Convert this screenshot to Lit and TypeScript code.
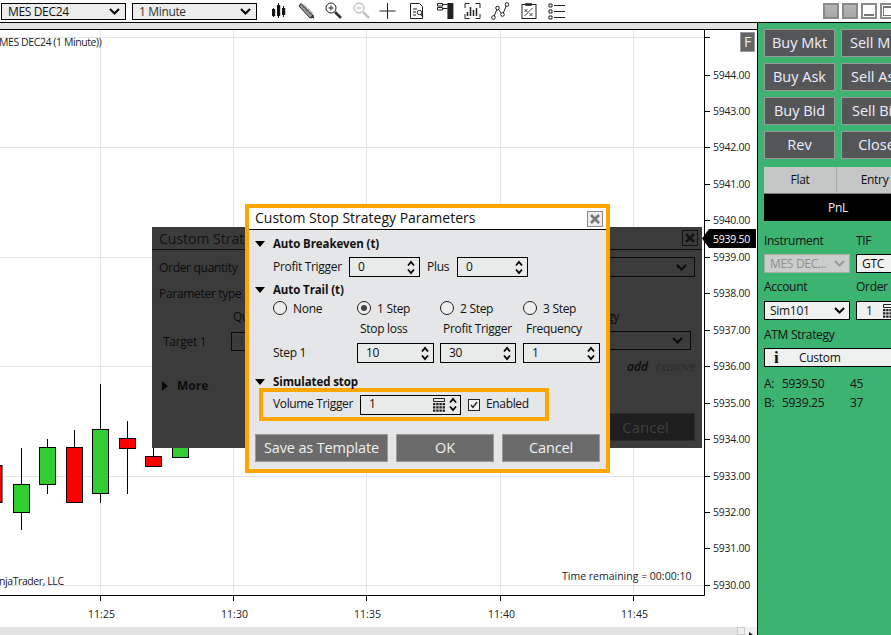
import { LitElement, html, css, svg } from "lit";
import { customElement } from "lit/decorators.js";

const chev = (c = "#000") => svg`<svg class="chev" width="11" height="7" viewBox="0 0 11 7"><path d="M1 1l4.500 4.500L10 1" fill="none" stroke="${c}" stroke-width="2"/></svg>`;
const updown = svg`<svg class="ud" width="8" height="15" viewBox="0 0 8 15"><path d="M1 5.500L4 2l3 3.500M1 9.500L4 13l3-3.500" fill="none" stroke="#000" stroke-width="1.800"/></svg>`;
const calc = svg`<svg width="12" height="14" viewBox="0 0 12 14"><path d="M0.500 0.500h11v3h-11z" fill="none" stroke="#222"/><path d="M0 5h2.400v2.200H0zM3.200 5h2.400v2.200H3.200zM6.400 5h2.400v2.200H6.400zM9.600 5H12v2.200H9.600zM0 8.300h2.400v2.200H0zM3.200 8.300h2.400v2.200H3.200zM6.400 8.300h2.400v2.200H6.400zM9.600 8.300H12v2.200H9.600zM0 11.600h2.400v2.200H0zM3.200 11.600h2.400v2.200H3.200zM6.400 11.600h2.400v2.200H6.400zM9.600 11.600H12v2.200H9.600z" fill="#222"/></svg>`;
const tri = svg`<svg class="tri" width="10" height="6" viewBox="0 0 10 6"><path d="M0 0h10L5 6z" fill="#000"/></svg>`;

const ticksY: [string, number][] = [["5944.00",75],["5943.00",111],["5942.00",147],["5941.00",184],["5940.00",220],["5939.00",257],["5938.00",293],["5937.00",330],["5936.00",366],["5935.00",403],["5934.00",439],["5933.00",476],["5932.00",512],["5931.00",548],["5930.00",585]];
const timesX: [string, number][] = [["11:25",100.5],["11:30",233.5],["11:35",366.5],["11:40",500.5],["11:45",633.5]];
type C = [number, number, number, number, number, string];
const candles: C[] = [
  [-6,465,502,450,510,"#ff0000"],
  [21.5,484,512,448,530,"#32cd32"],
  [47.5,447,484,439,494,"#32cd32"],
  [74.5,447,502,430,502,"#ff0000"],
  [100.5,429,493,384,503,"#32cd32"],
  [127.5,438,448,421,494,"#ff0000"],
  [153.5,456,466,440,466,"#ff0000"],
  [180.5,440,457,440,457,"#32cd32"],
];

@customElement("spin-box")
class SpinBox extends LitElement {
  static properties = { value: {}, calc: { type: Boolean } };
  value = "";
  calc = false;
  static styles = css`
    :host { display: flex; align-items: center; box-sizing: border-box; height: 20px; border: 1px solid #000; background: #e9eaea; padding: 0 4px 0 8px; font-size: 12px; color: #111; }
    .v { flex: 1; padding-bottom: 2px; }
    svg { display: block; }
    .c { margin-right: 4px; }
  `;
  render() {
    return html`<span class="v">${this.value}</span>${this.calc ? html`<span class="c">${calc}</span>` : ""}${updown}`;
  }
}

@customElement("stop-dialog")
class StopDialog extends LitElement {
  static styles = css`
    :host { display: block; box-sizing: border-box; width: 365px; height: 269px; border: 4px solid #ffa500; background: #e5e6e7; font-family: "Open Sans", sans-serif; font-size: 12px; letter-spacing: -0.3px; color: #111; }
    .title { box-sizing: border-box; height: 22px; background: #fff; border-bottom: 1px solid #000; display: flex; justify-content: space-between; align-items: center; padding: 0 3px 0 6px; font-size: 14px; letter-spacing: 0; }
    .title span:first-child { padding-bottom: 2px; }
    .x { width: 16px; height: 16px; box-sizing: border-box; border: 1px solid #8a8a8a; display: flex; align-items: center; justify-content: center; background: #eee; }
    .body { padding: 5px 6px 0 6px; }
    .sec { display: flex; align-items: center; gap: 8px; font-weight: 700; height: 17px; font-size: 11.5px; letter-spacing: -0.1px; }
    .row1 { display: flex; align-items: center; margin: 5px 0 4px 18px; height: 20px; }
    .row1 spin-box { width: 71px; }
    .row1 .lbl { width: 76px; padding-bottom: 2px; }
    .row1 .plus { width: 30px; margin-left: 7px; padding-bottom: 2px; }
    .grid { display: grid; grid-template-columns: 84px 83px 83px 83px; margin-left: 18px; margin-top: 1px; align-items: center; }
    .radio { display: flex; align-items: center; gap: 6px; height: 20px; padding-bottom: 2px; box-sizing: border-box; }
    .rc { width: 14px; height: 14px; box-sizing: border-box; border: 1px solid #222; border-radius: 50%; background: #eee; display: flex; align-items: center; justify-content: center; }
    .rc i { width: 6px; height: 6px; border-radius: 50%; background: #444; }
    .lb { height: 20px; display: flex; align-items: center; padding: 0 0 2px 3px; box-sizing: border-box; }
    .spins { display: grid; grid-template-columns: 84px 83px 83px 77px; margin: 4px 0 0 18px; align-items: center; }
    .spins span { padding-bottom: 2px; }
    .spins spin-box { width: 77px; }
    .spins spin-box:nth-child(3) { width: 76px; }
    .sim { margin-top: 10px; }
    .hl { box-sizing: border-box; width: 290px; height: 33px; border: 4px solid #ffa500; margin: -2px 0 0 4px; display: flex; align-items: center; padding-left: 10px; letter-spacing: -0.35px; }
    .hl .lbl { width: 87px; padding-bottom: 2px; }
    .hl .en { padding-bottom: 2px; }
    .hl spin-box { width: 101px; padding-right: 3px; }
    .cb { width: 12px; height: 12px; box-sizing: border-box; border: 1px solid #222; background: #f3f3f3; margin: 0 6px 0 7px; display: flex; align-items: center; justify-content: center; }
    .btns { display: grid; grid-template-columns: 133px 98px 98px; column-gap: 8px; margin-top: 13px; }
    .btn { height: 28px; box-sizing: border-box; background: #6b6b6b; border: 1px solid #9a9a9a; color: #f0f0f0; font-size: 14.5px; letter-spacing: -0.15px; display: flex; align-items: center; justify-content: center; padding-bottom: 1px; }
  `;
  render() {
    return html`
      <div class="title"><span>Custom Stop Strategy Parameters</span>
        <span class="x"><svg width="10" height="10" viewBox="0 0 10 10"><path d="M1 1l8 8M9 1l-8 8" stroke="#777" stroke-width="2.600"/></svg></span></div>
      <div class="body">
        <div class="sec">${tri}<span>Auto Breakeven (t)</span></div>
        <div class="row1"><span class="lbl">Profit Trigger</span><spin-box value="0"></spin-box><span class="plus">Plus</span><spin-box value="0"></spin-box></div>
        <div class="sec">${tri}<span>Auto Trail (t)</span></div>
        <div class="grid">
          <div class="radio"><span class="rc"></span>None</div>
          <div class="radio"><span class="rc"><i></i></span>1 Step</div>
          <div class="radio"><span class="rc"></span>2 Step</div>
          <div class="radio"><span class="rc"></span>3 Step</div>
          <div></div><div class="lb">Stop loss</div><div class="lb">Profit Trigger</div><div class="lb">Frequency</div>
        </div>
        <div class="spins"><span>Step 1</span><spin-box value="10"></spin-box><spin-box value="30"></spin-box><spin-box value="1"></spin-box></div>
        <div class="sec sim">${tri}<span>Simulated stop</span></div>
        <div class="hl"><span class="lbl">Volume Trigger</span><spin-box value="1" calc></spin-box>
          <span class="cb"><svg width="8" height="8" viewBox="0 0 8 8"><path d="M1 4l2 2.400L7 1" fill="none" stroke="#222" stroke-width="1.400"/></svg></span><span class="en">Enabled</span></div>
        <div class="btns"><div class="btn">Save as Template</div><div class="btn">OK</div><div class="btn">Cancel</div></div>
      </div>`;
  }
}

@customElement("app-root")
class AppRoot extends LitElement {
  static styles = css`
    :host { display: block; width: 891px; height: 635px; overflow: hidden; background: #fff; font-family: "Open Sans", sans-serif; color: #111; position: relative; }
    .root { display: flex; width: 891px; height: 635px; flex-direction: column; }
    .toolbar { height: 22px; display: flex; align-items: center; border-bottom: 1px solid #000; background: #fff; padding-left: 1px; }
    .sel { box-sizing: border-box; height: 17px; width: 125px; border: 1px solid #000; background: #ecedec; display: flex; align-items: center; justify-content: space-between; padding: 0 5px 0 6px; font-size: 12px; letter-spacing: -0.35px; margin-right: 6px; }
    .sel.m { color: #333; }
    .icons { display: flex; align-items: center; margin-left: 6px; }
    .icons svg { display: block; width: 20px; height: 20px; margin-right: 7.6px; overflow: visible; flex: none; }
    .win { margin-left: auto; display: flex; gap: 3px; margin-right: -5px; }
    .win span { width: 16px; height: 16px; box-sizing: border-box; border: 2px solid #8a8a8a; background: linear-gradient(#b8b6b6, #a8a6a6); display: block; }
    .win span.w { background: #fff; position: relative; display: flex; align-items: flex-end; justify-content: center; padding-bottom: 1px; }
    .win span.w i { display: block; width: 10px; height: 2px; background: #777; }
    .win span.w b { display: block; width: 10px; height: 10px; border: 1px solid #777; border-top-width: 2px; box-sizing: border-box; }
    .main { flex: 1; display: flex; min-height: 0; }
    .left { width: 757px; flex: none; display: flex; flex-direction: column; border-right: 1px solid #000; position: relative; }
    .strip { height: 6px; background: #e3e3e3; border-bottom: 1px solid #000; }
    .chart { flex: 1; min-height: 0; position: relative; }
    .chart svg.c { display: block; position: absolute; left: 0; top: -30px; }
    .chart text { font-family: "Open Sans", sans-serif; font-size: 10.5px; fill: #222; }
    .chart text.px { letter-spacing: -0.25px; }
    .chart text.tt { letter-spacing: -0.42px; }
    .scroll { height: 8px; background: #e3e3e3; display: flex; justify-content: flex-end; align-items: flex-start; }
    .thumb { width: 8px; height: 8px; background: #eee; border: 1px solid #ccc; box-sizing: border-box; }
    .arr { display: block; width: 12px; height: 8px; background: #f2f2f2; padding: 5px 0 0 4px; box-sizing: border-box; overflow: hidden; }
    .arr::before { content: ""; display: block; border-left: 4px solid #111; border-top: 3px solid transparent; border-bottom: 3px solid transparent; width: 0; height: 0; }
    .panel { flex: 1; background: #3cb371; min-width: 0; overflow: hidden; padding: 6px 0 0 6px; font-size: 12px; letter-spacing: -0.3px; color: #111; }
    .brow { display: flex; gap: 6px; width: 160px; margin-bottom: 6px; }
    .gb { width: 71px; height: 28px; flex: none; box-sizing: border-box; background: #555658; border: 1px solid #9a9a9a; color: #eef; font-size: 14.5px; letter-spacing: 0; display: flex; align-items: center; justify-content: center; white-space: nowrap; padding-bottom: 2px; }
    .tbl { width: 148px; margin-top: 8px; }
    .th { display: flex; height: 27px; background: #c5c6c6; font-size: 12px; border-bottom: 1px solid #777; box-sizing: border-box; padding-bottom: 1px; }
    .th span { flex: 1; display: flex; align-items: center; justify-content: center; }
    .th span:first-child { border-right: 1px solid #aaa; flex: none; width: 73px; box-sizing: border-box; }
    .pnl { height: 27px; background: #000; color: #eee; display: flex; align-items: center; justify-content: center; font-size: 12px; }
    .two { display: grid; grid-template-columns: 92px 92px; width: 184px; margin-top: 10px; }
    .lab { height: 19px; display: flex; align-items: center; }
    .box { box-sizing: border-box; height: 19px; border: 1px solid #000; background: #eff0f0; display: flex; align-items: center; padding: 0 4px 0 5px; justify-content: space-between; width: 86px; }
    .box.dis { background: #c9cdcb; border-color: #aaa; color: #8f8f8f; }
    .box.n { gap: 10px; justify-content: flex-start; width: 70px; padding-left: 9px; }
    .r2 { margin-top: 4px; }
    .r3 { margin-top: 5px; }
    .custom { box-sizing: border-box; height: 19px; width: 160px; border: 1px solid #000; background: #eff0f0; display: flex; align-items: center; padding-left: 9px; margin-top: 4px; }
    .custom b { font-family: "Liberation Serif", serif; font-size: 17px; width: 25px; }
    .quote { display: grid; grid-template-columns: 18px 68px 30px; height: 19px; align-items: center; }
    .quote.a { margin-top: 7px; }
    .atm { margin-top: 5px; }
    .dim { position: absolute; left: 152px; top: 227px; width: 550px; height: 221px; background: #3b3b3b; font-size: 12px; letter-spacing: -0.3px; color: #0c0c0c; overflow: hidden; }
    .dim .t { height: 23px; border-bottom: 1px solid #0c0c0c; display: flex; align-items: center; justify-content: space-between; padding: 0 4px 0 7px; font-size: 14px; letter-spacing: 0; box-sizing: border-box; color: #111; }
    .dim .x { width: 16px; height: 16px; box-sizing: border-box; border: 1px solid #141414; display: flex; align-items: center; justify-content: center; }
    .d { position: absolute; white-space: nowrap; }
    .dbox { position: absolute; box-sizing: border-box; border: 1px solid #0a0a0a; display: flex; align-items: center; padding-left: 6px; color: #2c2c2c; justify-content: flex-end; padding-right: 7px; }
    .more { display: flex; align-items: center; gap: 9px; font-weight: 700; font-size: 12px; letter-spacing: 0; }
    .add { font-style: italic; font-weight: 600; letter-spacing: 0; }
    .rem { font-style: italic; color: #2c2c2c; letter-spacing: 0; }
    .dcancel { background: #1e1e1e; border-color: #2c2c2c; justify-content: center; font-size: 15px; letter-spacing: 0; color: #404040; }
    .dlg { position: absolute; left: 245px; top: 204px; }
  `;
  render() {
    return html`<div class="root">
      <div class="toolbar">
        <div class="sel"><span>MES DEC24</span>${chev()}</div>
        <div class="sel m"><span>1 Minute</span>${chev()}</div>
        <div class="icons">
          <svg viewBox="0 0 20 20"><path d="M4.500 7v9M9.500 2v15M14.500 5v11" stroke="#111"/><rect x="3" y="8" width="3.200" height="7" fill="#111"/><rect x="8" y="4" width="3.200" height="11" fill="#111"/><rect x="13" y="7" width="3.200" height="7" fill="#111"/></svg>
          <svg viewBox="0 0 20 20"><path d="M4 2.500l12 12-1 2.500-2.500-.5L2 5z" fill="#999" stroke="#222"/><path d="M5 4.500l9 9M7 3.500l9 9" stroke="#222" stroke-width=".9" stroke-dasharray="1.200 1"/><path d="M14 15.500l2-2 1.500 4.500z" fill="#222"/></svg>
          <svg viewBox="0 0 20 20"><circle cx="7" cy="7" r="5" fill="#fff" stroke="#222"/><path d="M4.500 7h5M7 4.500v5" stroke="#222"/><path d="M11 11l6 6" stroke="#333" stroke-width="2.600"/></svg>
          <svg viewBox="0 0 20 20"><circle cx="7" cy="7" r="5" fill="#fff" stroke="#aaa"/><path d="M4.500 7h5" stroke="#aaa"/><path d="M11 11l6 6" stroke="#c4c4c4" stroke-width="2.600"/></svg>
          <svg viewBox="0 0 20 20"><path d="M8.500 2v16M0.500 10h16" stroke="#222"/></svg>
          <svg viewBox="0 0 20 20"><path d="M3.500 2.500h9l3 3v12h-12z" fill="#fff" stroke="#222"/><path d="M6 8h4M6 11h3M6 14h3" stroke="#222"/><circle cx="12.500" cy="11.500" r="2.200" fill="#fff" stroke="#222"/><path d="M14 13.500l2 2" stroke="#222" stroke-width="1.400"/></svg>
          <svg viewBox="0 0 20 20"><path d="M2.500 2.500h5v2.500h-5zM2.500 6.500h5V9h-5z" fill="#fff" stroke="#222"/><path d="M7.500 3.500h5M7.500 7.500h5" stroke="#222"/><rect x="12.400" y="2" width="6" height="16" fill="#222"/></svg>
          <svg viewBox="-0.500 0 20 20"><path d="M2.500 7V2.500H7M13 2.500h4.500V7M2.500 13v4.500H7M13 17.500h4.500V13" fill="none" stroke="#222"/><path d="M5 11v4M8 6v9M11 9v6M14 7v8" stroke="#222" stroke-width="1.500"/></svg>
          <svg viewBox="-0.500 0 20 20"><path d="M3 16.500L7 7l5 7 4.500-11" fill="none" stroke="#222"/><circle cx="3" cy="16.500" r="1.800" fill="#fff" stroke="#222"/><circle cx="7" cy="7" r="1.800" fill="#fff" stroke="#222"/><circle cx="12" cy="13.500" r="1.800" fill="#fff" stroke="#222"/><circle cx="16.500" cy="3.500" r="1.800" fill="#fff" stroke="#222"/></svg>
          <svg viewBox="-1.500 0 20 20"><rect x="3.500" y="3.500" width="14" height="14" fill="#fff" stroke="#222"/><path d="M7 2.500h6v2H7zM6 8l3 3M9 8l-3 3M11 12l3 3M14 12l-3 3M6 15l8-8" fill="none" stroke="#333" stroke-width=".9"/></svg>
          <svg viewBox="-1.500 0 20 20"><path d="M2.500 3h3v3h-3zM2.500 9h3v3h-3zM2.500 15h3v3h-3z" fill="none" stroke="#222"/><path d="M7.500 4.500h11M7.500 10.500h11M7.500 16.500h11" stroke="#222"/></svg>
        </div>
        <div class="win"><span></span><span></span><span class="w"><i></i></span><span class="w"><b></b></span></div>
      </div>
      <div class="main">
        <div class="left">
          <div class="strip"></div>
          <div class="chart">
            <svg class="c" width="757" height="635" viewBox="0 0 757 635">
              <g stroke="#e4e4e4" fill="none">
                ${timesX.map(([, x]) => svg`<path d="M${x} 30V595"/>`)}
                ${[37.5,147.5,257.5,366.5,476.5,585.5].map((y) => svg`<path d="M0 ${y}H704"/>`)}
              </g>
              ${candles.map(([x, t, b, wt, wb, col]) => svg`
                <path d="M${x} ${wt}V${wb}" stroke="#000"/>
                <rect x="${x - 8}" y="${t + 0.5}" width="16" height="${b - t}" fill="${col}" stroke="#000"/>`)}
              <path d="M0 595.500H704.500V30" fill="none" stroke="#000"/>
              ${ticksY.map(([l, y]) => svg`<path d="M705 ${y + 0.5}h5" stroke="#000"/><text class="px" x="713" y="${y + 4}">${l}</text>`)}
              <path d="M705 37.500h5" stroke="#000"/>
              ${timesX.map(([l, x]) => svg`<path d="M${x} 596v5" stroke="#000"/><text x="${x + 1}" y="618" text-anchor="middle">${l}</text>`)}
              <text class="tt" x="-1" y="46">MES DEC24 (1 Minute))</text>
              <text class="tt" x="-1" y="585">njaTrader, LLC</text>
              <text x="562" y="580">Time remaining = 00:00:10</text>
              <rect x="740.500" y="32.500" width="14" height="19" fill="#666" stroke="#999"/>
              <text x="747.500" y="47" text-anchor="middle" style="fill:#eee;font-size:14px">F</text>
              <path d="M702 238.500l7-9.500H756v19H709z" fill="#000"/>
              <text class="px" x="713" y="243" style="fill:#fff">5939.50</text>
            </svg>
          </div>
          <div class="scroll"><span class="thumb"></span><span class="arr"></span></div>
        </div>
        <div class="panel">
          <div class="brow"><div class="gb">Buy Mkt</div><div class="gb">Sell Mkt</div></div>
          <div class="brow"><div class="gb">Buy Ask</div><div class="gb">Sell Ask</div></div>
          <div class="brow"><div class="gb">Buy Bid</div><div class="gb">Sell Bid</div></div>
          <div class="brow"><div class="gb">Rev</div><div class="gb">Close</div></div>
          <div class="tbl"><div class="th"><span>Flat</span><span>Entry</span></div><div class="pnl">PnL</div></div>
          <div class="two">
            <div class="lab">Instrument</div><div class="lab">TIF</div>
            <div class="box dis r2"><span>MES DEC...</span>${chev("#999")}</div><div class="box r2"><span>GTC</span></div>
            <div class="lab r2">Account</div><div class="lab r2">Order qty</div>
            <div class="box r3"><span>Sim101</span>${chev()}</div><div class="box n r3"><span>1</span>${calc}</div>
          </div>
          <div class="lab atm">ATM Strategy</div>
          <div class="custom"><b>i</b>Custom</div>
          <div class="quote a"><span>A:</span><span>5939.50</span><span>45</span></div>
          <div class="quote"><span>B:</span><span>5939.25</span><span>37</span></div>
        </div>
      </div>
    </div>
    <div class="dim">
      <div class="t"><span>Custom Strat</span><span class="x"><svg width="10" height="10" viewBox="0 0 10 10"><path d="M1 1l8 8M9 1l-8 8" stroke="#151515" stroke-width="2.500"/></svg></span></div>
      <span class="d" style="left:7px;top:32px">Order quantity</span>
      <span class="d" style="left:7px;top:58px">Parameter type</span>
      <span class="d" style="left:81px;top:81px">Qu</span>
      <span class="d" style="left:11px;top:106px">Target 1</span>
      <span class="dbox" style="left:79px;top:105px;width:60px;height:19px;justify-content:flex-start">1</span>
      <span class="dbox" style="left:400px;top:30px;width:143px;height:20px">${chev("#0a0a0a")}</span>
      <span class="d" style="left:455px;top:81px">gy</span>
      <span class="dbox" style="left:400px;top:104px;width:139px;height:19px">${chev("#0a0a0a")}</span>
      <span class="d add" style="left:475px;top:131px">add</span>
      <span class="d rem" style="left:504px;top:131px">remove</span>
      <span class="d more" style="left:10px;top:150px"><svg width="6" height="10" viewBox="0 0 6 10"><path d="M0 0l6 5-6 5z" fill="#0a0a0a"/></svg>More</span>
      <span class="dbox dcancel" style="left:445px;top:186px;width:98px;height:28px">Cancel</span>
    </div>
    <stop-dialog class="dlg"></stop-dialog>`;
  }
}
